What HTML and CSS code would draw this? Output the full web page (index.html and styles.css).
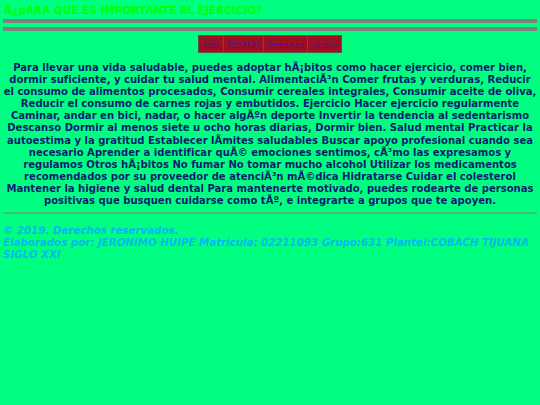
FILE: index.html
```html
<!DOCTYPE html>
<html lang="es">
<head>
<meta charset="utf-8">
<title>Ejercicio</title>
<link rel="stylesheet" href="styles.css">
</head>
<body>
<header class="top">
<h1 class="title">Â¿pARA QUE ES IMPORTANTE EL EJERCICIO?</h1>
<div class="bar"></div>
<div class="bar"></div>
</header>
<nav class="nav">
<a class="nav-link" href="#">Inicio</a>
<a class="nav-link" href="#">SOCALES</a>
<a class="nav-link" href="#">informacion</a>
<a class="nav-link" href="#">servicios</a>
</nav>
<p class="content">Para llevar una vida saludable, puedes adoptar hÃ¡bitos como hacer ejercicio, comer bien,<br>
dormir suficiente, y cuidar tu salud mental. AlimentaciÃ³n Comer frutas y verduras, Reducir<br>
el consumo de alimentos procesados, Consumir cereales integrales, Consumir aceite de oliva,<br>
Reducir el consumo de carnes rojas y embutidos. Ejercicio Hacer ejercicio regularmente<br>
Caminar, andar en bici, nadar, o hacer algÃºn deporte Invertir la tendencia al sedentarismo<br>
Descanso Dormir al menos siete u ocho horas diarias, Dormir bien. Salud mental Practicar la<br>
autoestima y la gratitud Establecer lÃ&shy;mites saludables Buscar apoyo profesional cuando sea<br>
necesario Aprender a identificar quÃ© emociones sentimos, cÃ³mo las expresamos y<br>
regulamos Otros hÃ¡bitos No fumar No tomar mucho alcohol Utilizar los medicamentos<br>
recomendados por su proveedor de atenciÃ³n mÃ©dica Hidratarse Cuidar el colesterol<br>
Mantener la higiene y salud dental Para mantenerte motivado, puedes rodearte de personas<br>
positivas que busquen cuidarse como tÃº, e integrarte a grupos que te apoyen.</p>
<hr class="rule">
<footer class="footer">
<p class="foot-line">© 2019. Derechos reservados.</p>
<p class="foot-line">Elaborados por: JERONIMO HUIPE Matricula: 02211093 Grupo:631 Plantel:COBACH TIJUANA SIGLO XXI</p>
</footer>
</body>
</html>
```
FILE: styles.css
```css
html { background: #00ff80; }
body {
  margin: 0;
  padding: 3px 3px 0 3px;
  background: #00ff80;
  font-family: "DejaVu Sans", Verdana, sans-serif;
}
.title {
  margin: 0 0 0 1px;
  font-size: 10.5px;
  line-height: 15px;
  font-weight: bold;
  color: #00ff00;
}
.bar {
  height: 4px;
  background: #808080;
  margin-top: 4px;
}
.bar:first-of-type { margin-top: 1px; }
.nav {
  display: flex;
  width: max-content;
  margin: 4px auto 0;
  border: 1px solid #555;
  background: #9e1020;
}
.nav-link {
  font-family: "Liberation Serif", "Times New Roman", serif;
  font-weight: bold;
  font-size: 7px;
  color: #3a1ab0;
  padding: 5px 3.3px 4px;
  border-right: 1px solid #555;
  line-height: 7px;
}
.nav-link:last-child { border-right: none; }
.content {
  margin: 9px 0 0;
  text-align: center;
  white-space: nowrap;
  font-weight: bold;
  font-size: 10.06px;
  line-height: 12.1px;
  color: #0c1c72;
}
.rule {
  margin: 5px 0 0;
  border: none;
  border-top: 2px solid #40c080;
}
.footer {
  margin-top: 10px;
  color: #00b8f0;
  font-weight: bold;
  font-style: italic;
  font-size: 10.25px;
  line-height: 12px;
}
.foot-line { margin: 0; }
```
